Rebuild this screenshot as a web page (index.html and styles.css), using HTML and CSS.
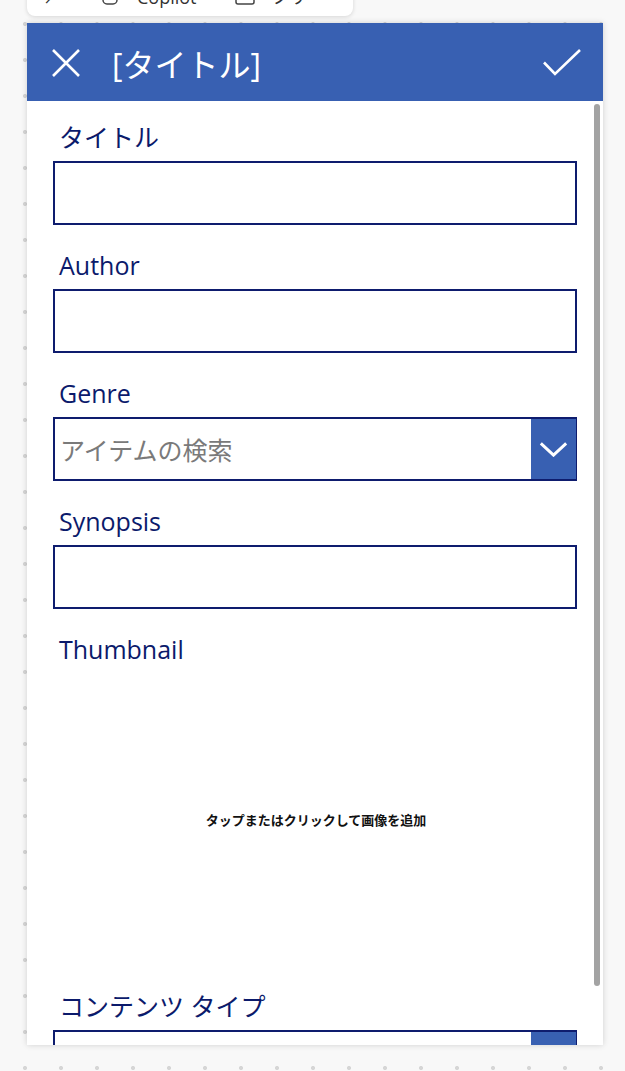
FILE: index.html
```html
<!DOCTYPE html>
<html lang="ja">
<head>
<meta charset="utf-8">
<title>Form</title>
<link rel="stylesheet" href="styles.css">
</head>
<body>
<div class="stage">
  <div class="toolbar">
    <span class="tb-item">↗</span>
    <svg class="tb-icon" viewBox="0 0 18 18" width="18" height="18"><rect x="2" y="2" width="14" height="14" rx="4" fill="none" stroke="#444" stroke-width="1.5"/></svg>
    <span class="tb-item">Copilot</span>
    <svg class="tb-icon tb-gap" viewBox="0 0 20 18" width="20" height="18"><rect x="1" y="2" width="18" height="14" rx="2" fill="none" stroke="#444" stroke-width="1.5"/></svg>
    <span class="tb-item">ツリー</span>
  </div>
  <div class="card">
    <div class="header">
      <svg class="icon-x" viewBox="0 0 28 28" width="28" height="28"><path d="M1 1 L27 27 M27 1 L1 27" stroke="#fff" stroke-width="2.6" fill="none"/></svg>
      <div class="title">[タイトル]</div>
      <svg class="icon-check" viewBox="0 0 38 28" width="38" height="28"><path d="M1 13.5 L12 25 L37 1" stroke="#fff" stroke-width="2.6" fill="none"/></svg>
    </div>
    <div class="form">
      <div class="label">タイトル</div>
      <div class="box"></div>
      <div class="label">Author</div>
      <div class="box"></div>
      <div class="label">Genre</div>
      <div class="box dropdown">
        <span class="placeholder">アイテムの検索</span>
        <span class="chev"><svg viewBox="0 0 30 16" width="29" height="15"><path d="M1.5 1.5 L15 14 L28.5 1.5" stroke="#fff" stroke-width="3.2" fill="none"/></svg></span>
      </div>
      <div class="label">Synopsis</div>
      <div class="box"></div>
      <div class="label">Thumbnail</div>
      <div class="thumb">タップまたはクリックして画像を追加</div>
      <div class="label">コンテンツ タイプ</div>
      <div class="box dropdown">
        <span class="placeholder"></span>
        <span class="chev"></span>
      </div>
    </div>
    <div class="scrollbar"></div>
  </div>
</div>
</body>
</html>
```

FILE: styles.css
```css
html, body {
  margin: 0;
  padding: 0;
}
body {
  width: 625px;
  height: 1071px;
  overflow: hidden;
  background-color: #f8f8f8;
  background-image: radial-gradient(circle, #d6d6d6 0, #d6d6d6 1.6px, rgba(214,214,214,0) 2.4px);
  background-size: 36px 36px;
  background-position: 7px 6px;
  font-family: "Open Sans", "Noto Sans CJK JP", sans-serif;
}
.stage {
  padding-left: 27px;
  display: flex;
  flex-direction: column;
}
.toolbar {
  width: 326px;
  height: 44px;
  margin-top: -28px;
  box-sizing: border-box;
  background: #fff;
  border-radius: 8px;
  box-shadow: 0 1px 4px rgba(0,0,0,0.14);
  display: flex;
  align-items: center;
  padding: 6px 0 0 16px;
  font-size: 18px;
  line-height: 24px;
  color: #333;
}
.tb-item {
  margin-right: 18px;
}
.tb-icon {
  margin: 0 18px 0 22px;
}
.tb-gap {
  margin-left: 20px;
  margin-right: 16px;
}
.card {
  position: relative;
  margin-top: 7px;
  width: 576px;
  height: 1022px;
  background: #fff;
  overflow: hidden;
  box-shadow: 0 0 6px rgba(0,0,0,0.16);
}
.header {
  height: 78px;
  background: #3860b2;
  display: flex;
  align-items: center;
  padding: 0 22px 0 25px;
  box-sizing: border-box;
}
.icon-x {
  flex: none;
  margin-top: 2px;
}
.title {
  flex: 1;
  margin-left: 32px;
  margin-top: 5px;
  color: #fff;
  font-size: 32px;
  line-height: 40px;
  font-family: "Open Sans", "Noto Sans CJK JP", sans-serif;
}
.icon-check {
  flex: none;
  margin-top: 2px;
}
.form {
  display: flex;
  flex-direction: column;
  padding: 0 26px;
}
.label {
  height: 60px;
  flex: none;
  box-sizing: border-box;
  display: flex;
  align-items: flex-end;
  padding: 0 0 9px 6px;
  font-size: 25px;
  line-height: 30px;
  color: #0b1a6b;
}
.label:not(:first-child) {
  height: 64px;
}
.box {
  height: 64px;
  box-sizing: border-box;
  border: 2px solid #0e1c6e;
  background: #fff;
  flex: none;
}
.dropdown {
  display: flex;
  align-items: stretch;
}
.placeholder {
  flex: 1;
  padding-left: 5px;
  font-size: 25px;
  line-height: 60px;
  color: #7a7a7a;
  font-family: "Noto Sans CJK JP", sans-serif;
}
.chev {
  width: 45px;
  flex: none;
  background: #3860b2;
  margin-right: -1px;
  display: flex;
  align-items: center;
  justify-content: center;
}
.chev svg {
  margin-top: 1px;
}
.thumb {
  height: 293px;
  flex: none;
  display: flex;
  align-items: center;
  justify-content: center;
  font-family: "Noto Sans CJK JP", sans-serif;
  font-weight: bold;
  font-size: 13px;
  color: #111;
  padding-left: 2px;
}
.scrollbar {
  position: absolute;
  left: 567px;
  top: 81px;
  width: 6px;
  height: 882px;
  border-radius: 3px;
  background: #a3a3a3;
}
```
